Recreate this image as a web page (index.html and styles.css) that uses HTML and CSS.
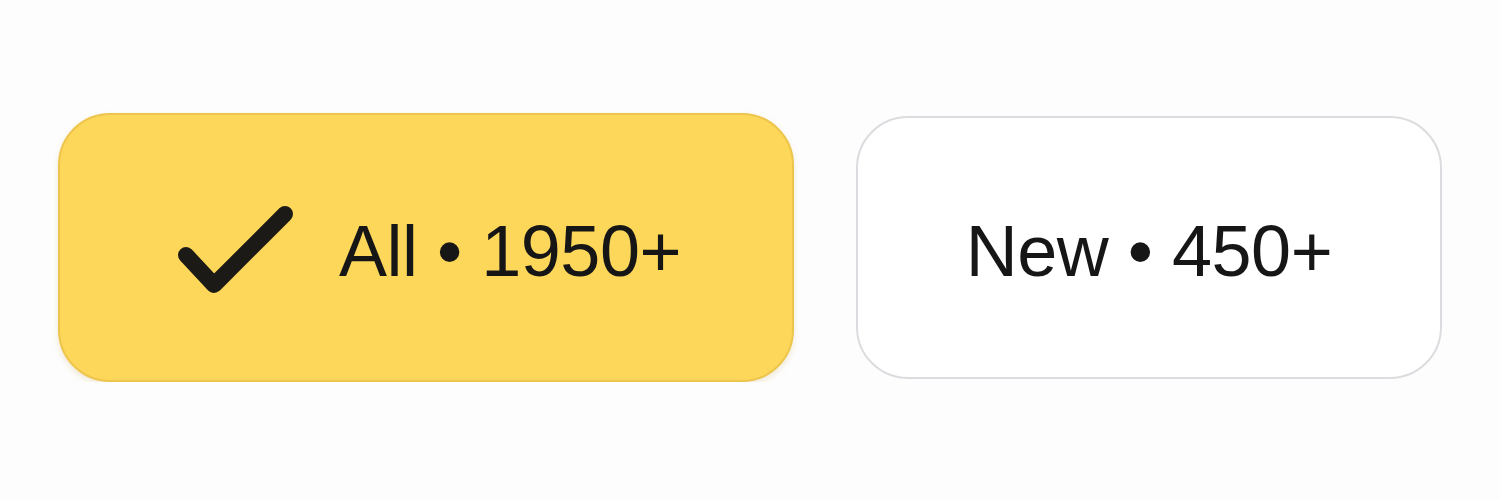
FILE: index.html
```html
<!DOCTYPE html>
<html lang="en">

<head>
    <meta charset="utf-8">
    <meta name="viewport" content="width=device-width, initial-scale=1">
    <link rel="stylesheet" href="styles.css">
</head>

<body>
    <div class="filters">
        <button class="chip chip-active">
            <svg class="check" width="116" height="90" viewBox="0 0 116 90">
                <polyline points="9,50 37,80 108,9" fill="none" stroke="#1c1a16" stroke-width="16"
                    stroke-linecap="round" stroke-linejoin="round" />
            </svg>
            <span class="chip-label">All &bull; 1950+</span>
        </button>
        <button class="chip chip-plain">
            <span class="chip-label">New &bull; 450+</span>
        </button>
    </div>
</body>

</html>
```

FILE: styles.css
```css
html,
body {
    margin: 0;
    padding: 0;
    background: #fdfdfd;
}

.filters {
    display: flex;
    align-items: center;
    gap: 62px;
    padding: 113px 0 0 58px;
}

.chip {
    display: flex;
    align-items: center;
    justify-content: center;
    box-sizing: border-box;
    margin: 0;
    padding: 0;
    border-radius: 52px;
    font-family: "Liberation Sans", Arial, sans-serif;
    font-size: 72px;
    color: #161616;
    cursor: pointer;
}

.chip-active {
    width: 736px;
    height: 269px;
    gap: 46px;
    padding-left: 6px;
    background: #fdd759;
    border: 2px solid #eec54c;
    box-shadow: 0 3px 6px rgba(180, 140, 30, 0.18);
}

.chip-plain {
    width: 586px;
    height: 263px;
    background: #ffffff;
    border: 2px solid #dcdce0;
}

.check {
    display: block;
    flex-shrink: 0;
    margin-top: 4px;
}

.chip-label {
    line-height: 1;
    letter-spacing: -0.5px;
    padding-top: 6px;
}
```
